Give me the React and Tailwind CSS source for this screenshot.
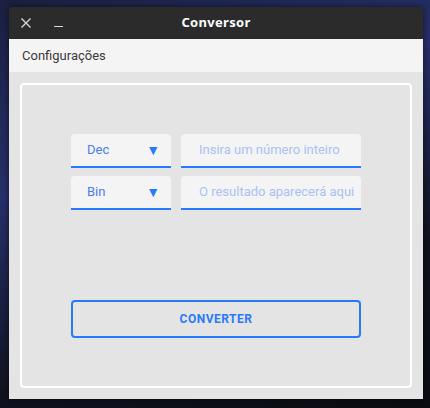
export default function App() {
  const rows = [
    { base: "Dec", placeholder: "Insira um número inteiro" },
    { base: "Bin", placeholder: "O resultado aparecerá aqui" },
  ];

  return (
    <div className="w-[430px] h-[408px] overflow-hidden bg-[linear-gradient(160deg,#1b2040_0%,#26306a_35%,#10131f_70%,#0b0c12_100%)] pt-[7px] pl-[9px]">
      {/* window */}
      <div className="w-[414px] h-[392px] flex flex-col rounded-t-[3px] overflow-hidden shadow-[0_0_6px_rgba(0,0,0,0.6)]">
        {/* title bar */}
        <div className="h-[32px] bg-[#2b2b2b] flex items-center relative font-['Noto_Sans',sans-serif]">
          <div className="w-[32px] flex justify-center">
            <svg width="12" height="12" viewBox="0 0 12 12" className="ml-[2px]">
              <path d="M1.5 1.5 L10.5 10.5 M10.5 1.5 L1.5 10.5" stroke="#d6d6d6" strokeWidth="1.4" />
            </svg>
          </div>
          <div className="ml-[13px] mt-[7px] w-[9px] h-[1.5px] bg-[#d6d6d6]" />
          <div className="absolute inset-0 flex items-center justify-center text-white text-[13px] font-bold tracking-[0.3px]">
            Conversor
          </div>
        </div>

        {/* menu */}
        <div className="h-[33px] bg-[#f4f4f4] flex items-center pl-[13px] text-[13px] text-[#3a3a3a] font-['Roboto',sans-serif]">
          Configurações
        </div>

        {/* content */}
        <div className="flex-1 bg-[#e4e4e4] p-[11px] font-['Roboto',sans-serif]">
          <div className="h-full border-2 border-white rounded-[4px] flex flex-col items-center pt-[49px]">
            <div className="flex flex-col gap-[8px]">
              {rows.map((r) => (
                <div key={r.base} className="flex gap-[10px]">
                  <div className="w-[100px] h-[34px] bg-[#f4f4f4] rounded-t-[4px] border-b-2 border-[#2979ff] flex items-center justify-between pl-[16px] pr-[11px]">
                    <span className="text-[13px] text-[#4a7cf4]">{r.base}</span>
                    <span className="text-[14px] text-[#2979ff] leading-none">▼</span>
                  </div>
                  <div className="w-[180px] h-[34px] bg-[#f4f4f4] rounded-t-[4px] border-b-2 border-[#2979ff] flex items-center pl-[18px]">
                    <span className="text-[13px] text-[#a9c2f3] whitespace-nowrap">{r.placeholder}</span>
                  </div>
                </div>
              ))}
            </div>

            <button className="mt-[90px] w-[290px] h-[38px] border-2 border-[#2979ff] rounded-[4px] text-[12px] font-bold text-[#2979ff] tracking-[0.5px]">
              CONVERTER
            </button>
          </div>
        </div>
      </div>
    </div>
  );
}
